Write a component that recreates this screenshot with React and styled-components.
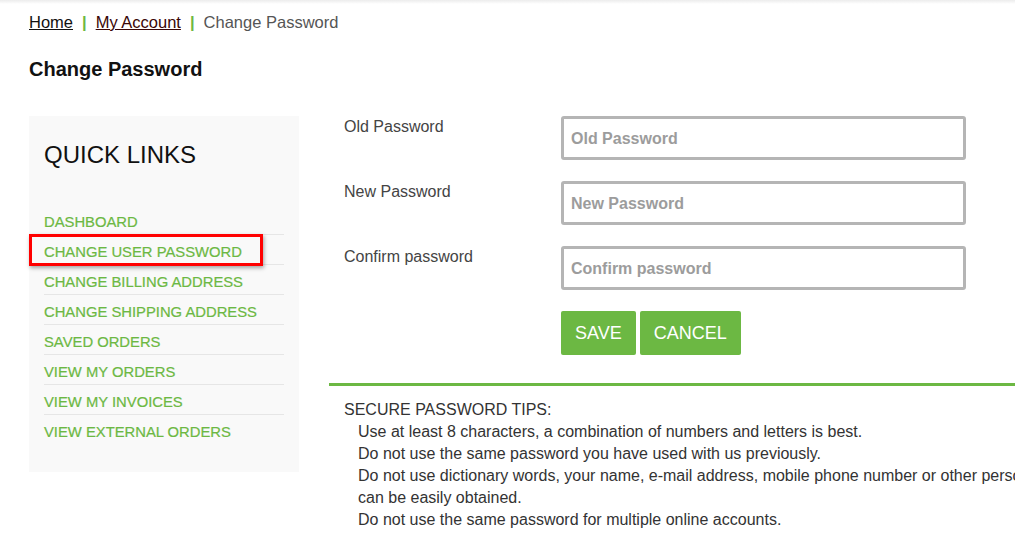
import styled, { createGlobalStyle } from "styled-components";

const GlobalStyle = createGlobalStyle`
  html, body {
    margin: 0;
    padding: 0;
    background: #ffffff;
    overflow: hidden;
  }
  body {
    font-family: "Liberation Sans", Arial, sans-serif;
    color: #333333;
  }
`;

const GREEN = "#6cb843";

const links = [
  "DASHBOARD",
  "CHANGE USER PASSWORD",
  "CHANGE BILLING ADDRESS",
  "CHANGE SHIPPING ADDRESS",
  "SAVED ORDERS",
  "VIEW MY ORDERS",
  "VIEW MY INVOICES",
  "VIEW EXTERNAL ORDERS",
];

const fields = [
  { label: "Old Password", placeholder: "Old Password" },
  { label: "New Password", placeholder: "New Password" },
  { label: "Confirm password", placeholder: "Confirm password" },
];

const tips = [
  "Use at least 8 characters, a combination of numbers and letters is best.",
  "Do not use the same password you have used with us previously.",
  "Do not use dictionary words, your name, e-mail address, mobile phone number or other personal information that",
  "can be easily obtained.",
  "Do not use the same password for multiple online accounts.",
];

export default function App() {
  return (
    <>
      <GlobalStyle />
      <TopShadow />
      <Page>
        <Breadcrumb>
          <Crumb href="#">Home</Crumb>
          <Sep>|</Sep>
          <Crumb href="#" $dark>
            My Account
          </Crumb>
          <Sep>|</Sep>
          <Current>Change Password</Current>
        </Breadcrumb>
        <Title>Change Password</Title>
        <Main>
          <Sidebar>
            <SideTitle>QUICK LINKS</SideTitle>
            <LinkList>
              {links.map((l, i) => (
                <LinkRow key={l} $last={i === links.length - 1}>
                  <SideLink href="#">{l}</SideLink>
                  {i === 1 && <Highlight />}
                </LinkRow>
              ))}
            </LinkList>
          </Sidebar>
          <Content>
            <Form>
              {fields.map((f) => (
                <FieldRow key={f.label}>
                  <Label>{f.label}</Label>
                  <Input type="password" placeholder={f.placeholder} />
                </FieldRow>
              ))}
              <Buttons>
                <Button>SAVE</Button>
                <Button>CANCEL</Button>
              </Buttons>
            </Form>
            <Divider />
            <Tips>
              <TipsTitle>SECURE PASSWORD TIPS:</TipsTitle>
              {tips.map((t) => (
                <Tip key={t}>{t}</Tip>
              ))}
            </Tips>
          </Content>
        </Main>
      </Page>
    </>
  );
}

const TopShadow = styled.div`
  height: 4px;
  background: linear-gradient(#ececec, #ffffff);
`;

const Page = styled.div`
  padding: 8px 0 0 29px;
`;

const Breadcrumb = styled.div`
  display: flex;
  align-items: center;
  font-size: 16.5px;
  line-height: 20px;
  height: 20px;
`;

const Crumb = styled.a`
  color: ${(p) => (p.$dark ? "#3a0606" : "#111111")};
  text-decoration: underline;
`;

const Sep = styled.span`
  color: ${GREEN};
  margin: 0 9px;
  font-weight: bold;
`;

const Current = styled.span`
  color: #555555;
`;

const Title = styled.h1`
  margin: 25px 0 0;
  font-size: 20px;
  line-height: 24px;
  font-weight: bold;
  color: #111111;
`;

const Main = styled.div`
  display: flex;
  align-items: flex-start;
  margin-top: 35px;
`;

const Sidebar = styled.aside`
  width: 270px;
  flex-shrink: 0;
  box-sizing: border-box;
  background: #f9f9f9;
  padding: 25px 15px 27px;
`;

const SideTitle = styled.h3`
  margin: 0;
  font-size: 24px;
  line-height: 28px;
  font-weight: normal;
  color: #111111;
`;

const LinkList = styled.ul`
  list-style: none;
  margin: 36px 0 0;
  padding: 0;
`;

const LinkRow = styled.li`
  position: relative;
  padding: 8px 0 3px;
  line-height: 18px;
  border-bottom: 1px solid ${(p) => (p.$last ? "transparent" : "#e6e6e6")};
`;

const SideLink = styled.a`
  color: ${GREEN};
  font-size: 14.8px;
  text-decoration: none;
  -webkit-text-stroke: 0.2px ${GREEN};
`;

const Highlight = styled.span`
  position: absolute;
  left: -15px;
  top: -1px;
  width: 234px;
  height: 32px;
  box-sizing: border-box;
  border: 3px solid #ff0000;
  box-shadow: 1px 2px 4px rgba(0, 0, 0, 0.35);
  pointer-events: none;
`;

const Content = styled.div`
  width: 760px;
  flex-shrink: 0;
  margin-left: 30px;
`;

const Form = styled.div`
  display: flex;
  flex-direction: column;
  gap: 21px;
  padding-left: 15px;
`;

const FieldRow = styled.div`
  display: flex;
  align-items: flex-start;
`;

const Label = styled.label`
  width: 217px;
  flex-shrink: 0;
  padding-top: 1px;
  font-size: 16px;
  line-height: 20px;
  color: #444444;
`;

const Input = styled.input`
  width: 405px;
  height: 44px;
  box-sizing: border-box;
  border: 3px solid #b5b5b5;
  border-radius: 3px;
  padding: 2px 7px 0;
  font-family: "Liberation Sans", Arial, sans-serif;
  font-size: 16px;
  outline: none;
  &::placeholder {
    color: #9c9c9c;
    font-weight: bold;
  }
`;

const Buttons = styled.div`
  display: flex;
  gap: 4px;
  margin-left: 217px;
`;

const Button = styled.button`
  height: 44px;
  padding: 0 14px;
  border: none;
  border-radius: 2px;
  background: ${GREEN};
  color: #ffffff;
  font-family: "Liberation Sans", Arial, sans-serif;
  font-size: 18px;
  cursor: pointer;
`;

const Divider = styled.div`
  height: 3px;
  background: ${GREEN};
  margin-top: 28px;
`;

const Tips = styled.div`
  padding: 13px 0 0 15px;
  font-family: "Liberation Sans Narrow", "Arial Narrow", "Liberation Sans", sans-serif;
  font-size: 16px;
  color: #333333;
`;

const TipsTitle = styled.div`
  line-height: 22px;
`;

const Tip = styled.div`
  line-height: 22px;
  padding-left: 14px;
  white-space: nowrap;
`;
